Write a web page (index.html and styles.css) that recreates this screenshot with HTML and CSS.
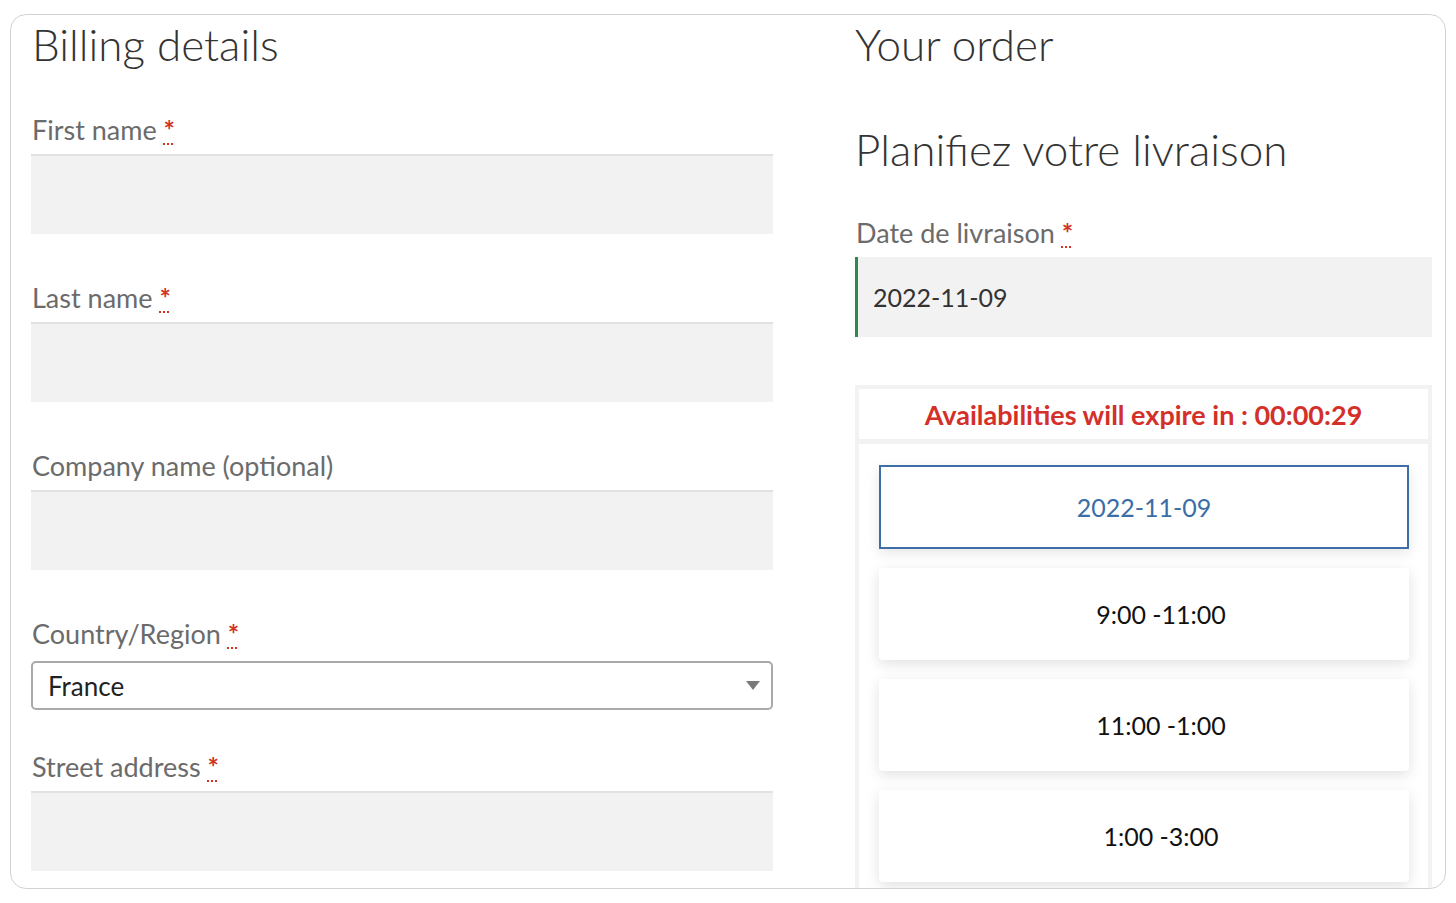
FILE: index.html
```html
<!DOCTYPE html>
<html lang="en">
<head>
<meta charset="utf-8">
<title>Checkout</title>
<link rel="stylesheet" href="styles.css">
</head>
<body>
<div class="frame">
  <div class="cols">
    <section class="billing">
      <h3 class="title">Billing details</h3>
      <div class="field">
        <label class="lbl">First name <abbr class="req">*</abbr></label>
        <div class="input"></div>
      </div>
      <div class="field">
        <label class="lbl">Last name <abbr class="req">*</abbr></label>
        <div class="input"></div>
      </div>
      <div class="field">
        <label class="lbl">Company name (optional)</label>
        <div class="input"></div>
      </div>
      <div class="field field-country">
        <label class="lbl">Country/Region <abbr class="req">*</abbr></label>
        <div class="select"><span>France</span><span class="arrow"></span></div>
      </div>
      <div class="field">
        <label class="lbl">Street address <abbr class="req">*</abbr></label>
        <div class="input"></div>
      </div>
    </section>
    <section class="order">
      <h3 class="title">Your order</h3>
      <h3 class="title plan">Planifiez votre livraison</h3>
      <div class="field">
        <label class="lbl">Date de livraison <abbr class="req">*</abbr></label>
        <div class="input date-input">2022-11-09</div>
      </div>
      <div class="avail">
        <div class="avail-head">Availabilities will expire in : 00:00:29</div>
        <div class="avail-body">
          <div class="day">2022-11-09</div>
          <div class="slot">9:00 -11:00</div>
          <div class="slot">11:00 -1:00</div>
          <div class="slot">1:00 -3:00</div>
        </div>
      </div>
    </section>
  </div>
</div>
</body>
</html>
```
FILE: styles.css
```css
* { box-sizing: border-box; }
html, body { margin: 0; padding: 0; background: #fff; }
body { font-family: "Lato", "Liberation Sans", sans-serif; }

.frame {
  margin: 14px 10px 0 10px;
  height: 875px;
  border: 1px solid #d2d2d2;
  border-radius: 16px;
  overflow: hidden;
  padding: 3px 13px 0 20px;
}

.cols {
  display: flex;
  gap: 82px;
}

.billing { width: 742px; flex: none; }
.order { flex: 1; }

.title {
  margin: 0;
  font-weight: 300;
  font-size: 44px;
  line-height: 53px;
  color: #333;
  padding-left: 0;
}
.billing .title { margin-bottom: 43px; padding-left: 1px; }
.plan { margin-top: 52px; margin-bottom: 41px; }

.field { margin-bottom: 48px; }
.lbl {
  display: block;
  font-size: 27px;
  line-height: 32px;
  color: #6b6b6b;
  margin-bottom: 8px;
  padding-left: 1px;
}
.req {
  color: #d0341f;
  font-weight: 700;
  text-decoration: underline dotted #d0341f;
  text-underline-offset: 3px;
  text-decoration-thickness: 2px;
  border: none;
}
.input {
  height: 80px;
  background: #f2f2f2;
  box-shadow: inset 0 2px 0 #e2e2e2;
}

.field-country { margin-bottom: 41px; }
.field-country .lbl { margin-bottom: 11px; }
.select {
  height: 49px;
  border: 2px solid #a9a9a9;
  border-radius: 5px;
  display: flex;
  align-items: center;
  justify-content: space-between;
  padding: 0 11px 0 15px;
  font-size: 26px;
  color: #222;
}
.arrow {
  width: 0; height: 0;
  border-left: 7px solid transparent;
  border-right: 7px solid transparent;
  border-top: 9px solid #7a7a7a;
}

.date-input {
  border-left: 3px solid #2b8a4e;
  box-shadow: none;
  font-size: 25px;
  color: #333;
  display: flex;
  align-items: center;
  padding-left: 15px;
}

.avail {
  border: 4px solid #f2f2f2;
}
.avail-head {
  height: 50px;
  border-bottom: 5px solid #f2f2f2;
  display: flex;
  align-items: center;
  justify-content: center;
  font-weight: 700;
  font-size: 27px;
  color: #d3302a;
  box-sizing: content-box;
}
.avail-body {
  padding: 21px 19px 20px 20px;
  display: flex;
  flex-direction: column;
  gap: 19px;
}
.day {
  height: 84px;
  border: 2px solid #3d6fa6;
  display: flex;
  align-items: center;
  justify-content: center;
  font-size: 25px;
  color: #3a6ea6;
  box-shadow: 0 4px 12px rgba(0,0,0,0.10);
}
.slot {
  height: 92px;
  background: #fff;
  border-radius: 4px;
  box-shadow: 0 4px 14px rgba(0,0,0,0.12);
  display: flex;
  align-items: center;
  justify-content: center;
  padding-left: 34px;
  font-size: 25px;
  color: #111;
}
```
